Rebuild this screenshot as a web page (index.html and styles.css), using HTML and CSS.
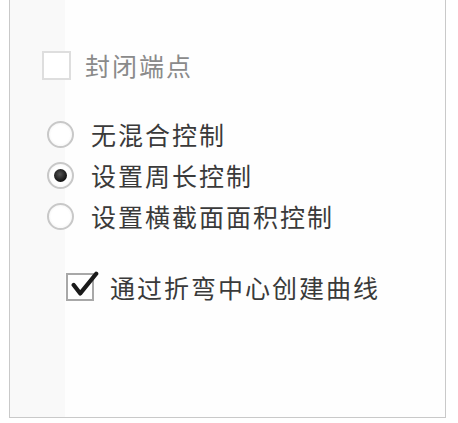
FILE: index.html
```html
<!DOCTYPE html>
<html lang="zh-CN">
<head>
    <meta charset="UTF-8">
    <title>曲线选项</title>
    <link rel="stylesheet" href="styles.css">
</head>
<body>
    <div class="panel">
        <label class="check-row disabled">
            <span class="box"></span>
            <span class="label">封闭端点</span>
        </label>

        <div class="radio-group">
            <label class="radio-row">
                <span class="radio"></span>
                <span class="label">无混合控制</span>
            </label>
            <label class="radio-row">
                <span class="radio checked"></span>
                <span class="label">设置周长控制</span>
            </label>
            <label class="radio-row">
                <span class="radio"></span>
                <span class="label">设置横截面面积控制</span>
            </label>
        </div>

        <label class="check-row bend">
            <span class="box checked">
                <svg viewBox="0 0 32 30" class="tick">
                    <path d="M5 15 L12 24 L29 3" fill="none" stroke="#1a1a1a" stroke-width="4.5" stroke-linecap="round" stroke-linejoin="round"/>
                </svg>
            </span>
            <span class="label">通过折弯中心创建曲线</span>
        </label>
    </div>
</body>
</html>
```

FILE: styles.css
```css
body {
    margin: 0;
    background: #ffffff;
    font-family: "Noto Sans CJK SC", "Noto Sans", sans-serif;
}

.panel {
    box-sizing: border-box;
    margin-left: 9px;
    width: 437px;
    height: 418px;
    border: 1px solid #c9c9c9;
    border-top: none;
    background: linear-gradient(to right, #f9f9f9 0, #f9f9f9 55px, #fefefe 55px);
    padding: 51px 0 0 32px;
    display: flex;
    flex-direction: column;
}

.label {
    font-size: 25px;
    letter-spacing: 2px;
    color: #3a3a3a;
    line-height: 1;
}

.check-row,
.radio-row {
    display: flex;
    align-items: center;
}

.check-row .box {
    box-sizing: border-box;
    width: 29px;
    height: 29px;
    border: 2px solid #dedede;
    background: #fff;
    margin-right: 14px;
    position: relative;
}

.check-row.disabled .label {
    color: #8a8a8a;
}

.radio-group {
    display: flex;
    flex-direction: column;
    gap: 14px;
    margin-top: 41px;
    padding-left: 5px;
}

.radio {
    box-sizing: border-box;
    width: 27px;
    height: 27px;
    border-radius: 50%;
    border: 2px solid #c8c8c8;
    background: radial-gradient(circle, #fff 55%, #ececec 100%);
    margin-right: 17px;
    display: flex;
    align-items: center;
    justify-content: center;
}

.radio.checked::after {
    content: '';
    width: 13px;
    height: 13px;
    border-radius: 50%;
    background: radial-gradient(circle at 45% 40%, #555 0, #111 70%);
}

.check-row.bend {
    margin-top: 43px;
    padding-left: 24px;
}

.check-row.bend .box {
    border: 2px solid #a8a8a8;
    width: 28px;
    height: 28px;
    margin-right: 16px;
}

.tick {
    position: absolute;
    left: 1px;
    top: -5px;
    width: 30px;
    height: 30px;
}
```
